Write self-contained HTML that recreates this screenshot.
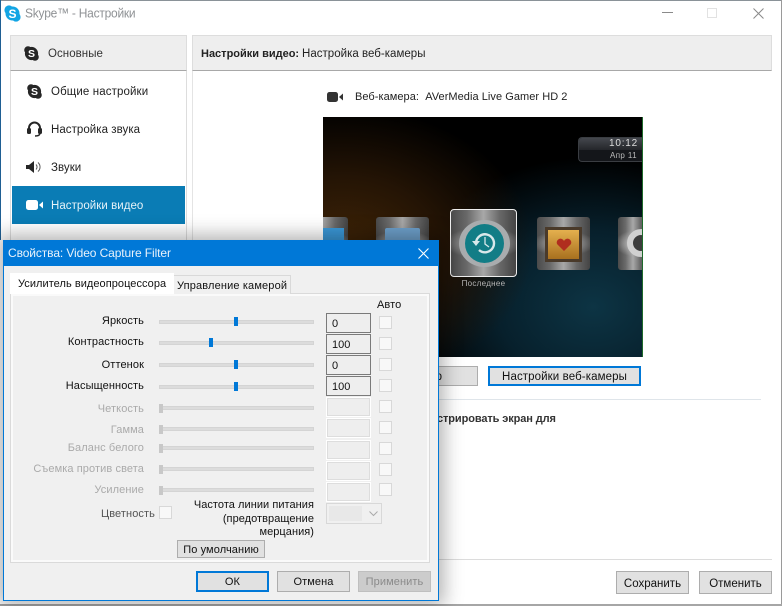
<!DOCTYPE html>
<html lang="ru"><head><meta charset="utf-8"><title>Skype</title>
<style>
html,body{margin:0;padding:0;width:782px;height:606px;overflow:hidden;background:#fff}
body{position:relative;font:11.5px/14px "Liberation Sans","DejaVu Sans",sans-serif;color:#111}
div,span{position:absolute;box-sizing:border-box;white-space:nowrap}
svg{position:absolute;overflow:visible}
.t{letter-spacing:.05px}
.hd{background:#eee;border:1px solid #ddd;border-bottom:1px solid #a8a8a8}
.side{left:51px;color:#222}
.lbl{right:638px;color:#111;font-size:11px;letter-spacing:.1px}
.off{color:#aaa}
.tr{left:159px;width:155px;height:4px;background:#dcdcdc;border:1px solid #d4d4d4}
.th{width:4px;height:9px;background:#0078d7}
.tg{left:159px;width:4px;height:9px;background:#c8c8c8}
.box{left:326px;width:45px;height:20px;background:#eee;border:1px solid #7a7a7a;padding:3px 0 0 5px;font-size:11px}
.box.d{border-color:#fff;box-shadow:inset 0 0 0 1px #ddd}
.ck{left:379px;width:13px;height:13px;background:#f8f8f8;border:1px solid #d8d8d8}
.btn{background:#e1e1e1;border:1px solid #adadad;text-align:center;font-size:11.5px;color:#111}
.dbtn{font-size:11px;letter-spacing:.1px}
.metal{border-radius:3px;background:radial-gradient(ellipse 60% 24% at 50% 50%,rgba(215,215,215,.75) 0,rgba(215,215,215,0) 100%),linear-gradient(90deg,#4a4a4a 0,#6a6a6a 25%,#a8a8a8 50%,#686868 75%,#444 100%)}
</style></head><body>

<!-- main window frame -->
<div style="left:0;top:0;width:782px;height:1px;background:#8a9298"></div>
<div style="left:0;top:0;width:1px;height:240px;background:#1f5f93"></div>
<div style="left:781px;top:0;width:1px;height:606px;background:#9a9a9a"></div>
<div style="left:0;top:604px;width:782px;height:2px;background:#a6a6a6"></div>

<!-- title bar -->
<svg style="left:4px;top:5px" width="17" height="17" viewBox="0 0 17 17"><circle cx="5" cy="5" r="4.6" fill="#12a5e4"/><circle cx="12" cy="12" r="4.6" fill="#12a5e4"/><circle cx="8.5" cy="8.5" r="7" fill="#12a5e4"/><text x="8.5" y="12.8" font-family="Liberation Sans" font-size="12" font-weight="700" fill="#fff" text-anchor="middle">S</text></svg>
<div style="left:25px;top:5px;font-size:12px;line-height:17px;color:#8f9295;letter-spacing:-.25px;transform-origin:0 50%;transform:scaleY(1.1)">Skype™ - Настройки</div>
<div style="left:662px;top:12px;width:11px;height:1px;background:#8a8a8a"></div>
<div style="left:707px;top:8px;width:10px;height:10px;border:1px solid #e2e2e2"></div>
<svg style="left:753px;top:8px" width="11" height="11"><path d="M.5.5 10.5 10.5M10.5.5.5 10.5" stroke="#8a8a8a" stroke-width="1" fill="none"/></svg>

<!-- sidebar -->
<div style="left:10px;top:35px;width:177px;height:210px;border-left:1px solid #ddd;border-right:1px solid #ddd"></div>
<div class="hd" style="left:10px;top:35px;width:177px;height:36px"></div>
<svg style="left:24px;top:46px" width="15" height="15" viewBox="0 0 15 15"><circle cx="4" cy="4" r="3.8" fill="#262626"/><circle cx="11" cy="11" r="3.8" fill="#262626"/><circle cx="7.5" cy="7.5" r="6.6" fill="#262626"/><text x="7.5" y="11.2" font-family="Liberation Sans" font-size="10.5" font-weight="700" fill="#fff" text-anchor="middle">S</text></svg>
<div class="t side" style="left:48px;top:47px;color:#333">Основные</div>

<svg style="left:27px;top:84px" width="15" height="15" viewBox="0 0 15 15"><circle cx="4" cy="4" r="3.8" fill="#262626"/><circle cx="11" cy="11" r="3.8" fill="#262626"/><circle cx="7.5" cy="7.5" r="6.6" fill="#262626"/><text x="7.5" y="11.2" font-family="Liberation Sans" font-size="10.5" font-weight="700" fill="#fff" text-anchor="middle">S</text></svg>
<div class="t side" style="top:85px;letter-spacing:.12px">Общие настройки</div>

<svg style="left:27px;top:121px" width="15" height="16" viewBox="0 0 15 16"><path d="M2 9V7a5.5 5.5 0 0 1 11 0v2" fill="none" stroke="#262626" stroke-width="2"/><rect x="0" y="7" width="4" height="6" rx="1.5" fill="#262626"/><rect x="11" y="7" width="4" height="6" rx="1.5" fill="#262626"/><path d="M13 12c0 2-2 3-5 3" fill="none" stroke="#262626" stroke-width="1.5"/></svg>
<div class="t side" style="top:123px">Настройка звука</div>

<svg style="left:26px;top:161px" width="16" height="12" viewBox="0 0 16 12"><path d="M0 4h3l5-4v12L3 8H0z" fill="#262626"/><path d="M10 3.5a3.5 3.5 0 0 1 0 5M12 1.5a6 6 0 0 1 0 9" fill="none" stroke="#555" stroke-width="1"/></svg>
<div class="t side" style="top:161px">Звуки</div>

<div style="left:12px;top:186px;width:173px;height:38px;background:#0a7cb5"></div>
<svg style="left:26px;top:200px" width="17" height="10" viewBox="0 0 17 10"><rect x="0" y="0" width="12" height="10" rx="2.5" fill="#fff"/><path d="M13 5l4-3.5v7z" fill="#fff"/></svg>
<div class="t side" style="top:199px;color:#e6f2f8">Настройки видео</div>

<!-- content header -->
<div class="hd" style="left:192px;top:35px;width:580px;height:36px"></div>
<div style="left:201px;top:47px;color:#222;font-size:11px;font-weight:700">Настройки видео:</div>
<div style="left:302px;top:47px;color:#222;letter-spacing:.02px">Настройка веб-камеры</div>
<div style="left:192px;top:71px;width:1px;height:180px;background:#e4e4e4"></div>

<!-- webcam row -->
<svg style="left:327px;top:92px" width="17" height="10" viewBox="0 0 17 10"><rect x="0" y="0" width="11" height="10" rx="2.5" fill="#333"/><path d="M12 5l4-3.5v7z" fill="#333"/></svg>
<div style="left:355px;top:90px;color:#222;font-size:11px;letter-spacing:.05px">Веб-камера:&nbsp; AVerMedia Live Gamer HD 2</div>

<!-- video preview -->
<div style="left:323px;top:117px;width:320px;height:240px;overflow:hidden;background:#000">
  <div style="left:0;top:0;width:320px;height:240px;background:radial-gradient(ellipse 190px 140px at 20px 130px,#3f2406 0,#241405 50%,rgba(0,0,0,0) 100%),radial-gradient(ellipse 190px 150px at 270px 190px,#0d3444 0,#07202c 50%,rgba(0,0,0,0) 100%),#000"></div>
  <div style="left:255px;top:20px;width:65px;height:25px;background:#14161a;border:1px solid #3a3d42;border-right:0;border-radius:4px 0 0 4px"></div>
  <div style="left:256px;top:21px;width:64px;height:12px;background:linear-gradient(#44474d,#24262a);border-radius:3px 0 0 0"></div>
  <div style="right:5px;top:21px;font-size:10px;line-height:12px;color:#ddd;letter-spacing:.8px">10:12</div>
  <div style="right:6px;top:34px;font-size:8px;line-height:10px;color:#bbb;letter-spacing:.4px">Апр 11</div>

  <div class="metal" style="left:-27px;top:100px;width:52px;height:53px"></div>
  <div style="left:0;top:111px;width:21px;height:30px;background:#3a97d6"></div>

  <div class="metal" style="left:53px;top:100px;width:53px;height:53px"></div>
  <div style="left:62px;top:111px;width:35px;height:26px;background:#6d9fca;border-radius:2px"></div>

  <div class="metal" style="left:127px;top:92px;width:67px;height:68px;border:1px solid #eee;border-radius:4px"></div>
  <div style="left:136px;top:103px;width:51px;height:47px;border-radius:50%;background:#a9acae"></div>
  <div style="left:142px;top:107px;width:39px;height:39px;border-radius:50%;background:#127d86"></div>
  <svg style="left:148px;top:113px" width="26" height="26" viewBox="0 0 26 26"><path d="M5 13a9 9 0 1 1 3 7" fill="none" stroke="#d8e8ea" stroke-width="2.4"/><path d="M1 11h8l-4 5z" fill="#d8e8ea"/><path d="M14 7v7l4 3" fill="none" stroke="#d8e8ea" stroke-width="1.3"/></svg>
  <div style="left:127px;top:161px;width:67px;text-align:center;font-size:8px;line-height:12px;color:#b5b5b5;letter-spacing:.3px">Последнее</div>

  <div class="metal" style="left:214px;top:100px;width:53px;height:53px"></div>
  <div style="left:222px;top:110px;width:37px;height:35px;background:linear-gradient(#e4b04e,#a8701f);border:3px solid #4a3a2a"></div>
  <svg style="left:233px;top:121px" width="16" height="13" viewBox="0 0 16 13"><path d="M8 13 1 6a3.8 3.8 0 0 1 7-3 3.8 3.8 0 0 1 7 3z" fill="#b02e1e"/></svg>

  <div class="metal" style="left:295px;top:100px;width:30px;height:53px"></div>
  <div style="left:304px;top:112px;width:28px;height:28px;border-radius:50%;border:6px solid #d0d0d0;background:#3c3c3c"></div>
  <div style="left:319px;top:0;width:1px;height:240px;background:#1d6a2a"></div>
</div>

<!-- below preview -->
<div class="btn" style="left:400px;top:366px;width:78px;height:20px;text-align:right;padding:3px 35px 0 0">р</div>
<div class="btn" style="left:488px;top:366px;width:153px;height:20px;border:2px solid #0078d7;padding-top:2px;letter-spacing:.1px">Настройки веб-камеры</div>
<div style="left:400px;top:399px;width:361px;height:1px;background:#dfe5ea"></div>
<div style="left:437px;top:412px;font-weight:700;font-size:11px;letter-spacing:-.1px;color:#333">стрировать экран для</div>
<div style="left:400px;top:559px;width:372px;height:1px;background:#dcdcdc"></div>
<div class="btn" style="left:616px;top:571px;width:73px;height:23px;padding-top:5px">Сохранить</div>
<div class="btn" style="left:699px;top:571px;width:73px;height:23px;padding-top:5px">Отменить</div>

<!-- dialog -->
<div style="left:3px;top:240px;width:436px;height:361px;background:#f0f0f0;border:1px solid #0078d7;box-shadow:0 0 18px 5px rgba(0,0,0,.3)"></div>
<div style="left:3px;top:240px;width:436px;height:26px;background:#0078d7"></div>
<div style="left:8px;top:245px;font-size:12px;line-height:16px;color:#e8f2fb;letter-spacing:-.1px">Свойства: Video Capture Filter</div>
<svg style="left:418px;top:248px" width="11" height="11"><path d="M.5.5 10.5 10.5M10.5.5.5 10.5" stroke="#fff" stroke-width="1.1" fill="none"/></svg>

<!-- tab panel -->
<div style="left:10px;top:293px;width:420px;height:270px;background:#f0f0f0;border:1px solid #dadada;box-shadow:inset 0 0 0 2px #fafafa"></div>
<div style="left:173px;top:275px;width:118px;height:19px;background:#f0f0f0;border:1px solid #d9d9d9;border-bottom:0"></div>
<div style="left:177px;top:279px;font-size:11px;letter-spacing:.15px">Управление камерой</div>
<div style="left:10px;top:273px;width:164px;height:21px;background:#fff"></div>
<div style="left:18px;top:277px;font-size:11px;letter-spacing:.05px">Усилитель видеопроцессора</div>

<div style="left:377px;top:298px;font-size:11px;letter-spacing:.1px">Авто</div>

<div class="lbl" style="top:314px">Яркость</div>
<div class="lbl" style="top:335px">Контрастность</div>
<div class="lbl" style="top:358px">Оттенок</div>
<div class="lbl" style="top:379px">Насыщенность</div>
<div class="lbl off" style="top:402px">Четкость</div>
<div class="lbl off" style="top:423px">Гамма</div>
<div class="lbl off" style="top:441px">Баланс белого</div>
<div class="lbl off" style="top:462px">Съемка против света</div>
<div class="lbl off" style="top:483px">Усиление</div>

<div class="tr" style="top:320px"></div><div class="th" style="left:234px;top:317px"></div>
<div class="tr" style="top:341px"></div><div class="th" style="left:209px;top:338px"></div>
<div class="tr" style="top:363px"></div><div class="th" style="left:234px;top:360px"></div>
<div class="tr" style="top:385px"></div><div class="th" style="left:234px;top:382px"></div>
<div class="tr" style="top:406px"></div><div class="tg" style="top:404px"></div>
<div class="tr" style="top:427px"></div><div class="tg" style="top:425px"></div>
<div class="tr" style="top:446px"></div><div class="tg" style="top:444px"></div>
<div class="tr" style="top:467px"></div><div class="tg" style="top:465px"></div>
<div class="tr" style="top:488px"></div><div class="tg" style="top:486px"></div>

<div class="box" style="top:313px">0</div>
<div class="box" style="top:334px">100</div>
<div class="box" style="top:355px">0</div>
<div class="box" style="top:376px">100</div>
<div class="box d" style="top:397px"></div>
<div class="box d" style="top:418px"></div>
<div class="box d" style="top:440px"></div>
<div class="box d" style="top:461px"></div>
<div class="box d" style="top:482px"></div>

<div class="ck" style="top:316px"></div>
<div class="ck" style="top:337px"></div>
<div class="ck" style="top:358px"></div>
<div class="ck" style="top:379px"></div>
<div class="ck" style="top:400px"></div>
<div class="ck" style="top:421px"></div>
<div class="ck" style="top:442px"></div>
<div class="ck" style="top:463px"></div>
<div class="ck" style="top:483px"></div>

<div style="right:627px;top:507px;font-size:11px;color:#555;letter-spacing:.1px">Цветность</div>
<div class="ck" style="left:159px;top:506px"></div>
<div style="right:468px;top:499px;text-align:right;font-size:11px;line-height:13.5px;letter-spacing:.05px;white-space:pre">Частота линии питания
(предотвращение
мерцания)</div>
<div style="left:326px;top:503px;width:56px;height:21px;background:#f0f0f0;border:1px solid #d8d8d8"></div>
<div style="left:329px;top:506px;width:33px;height:15px;background:#e8e8e8"></div>
<svg style="left:369px;top:511px" width="9" height="5"><path d="M.5.5 4.5 4.5 8.5.5" fill="none" stroke="#aaa"/></svg>

<div class="btn dbtn" style="left:177px;top:540px;width:88px;height:18px;padding-top:2px">По умолчанию</div>
<div class="btn dbtn" style="left:196px;top:571px;width:73px;height:21px;border:2px solid #0078d7;padding-top:2px">ОК</div>
<div class="btn dbtn" style="left:277px;top:571px;width:73px;height:21px;padding-top:3px">Отмена</div>
<div class="btn dbtn" style="left:358px;top:571px;width:73px;height:21px;padding-top:3px;background:#ccc;border-color:#bfbfbf;color:#8a8a8a">Применить</div>
</body></html>
